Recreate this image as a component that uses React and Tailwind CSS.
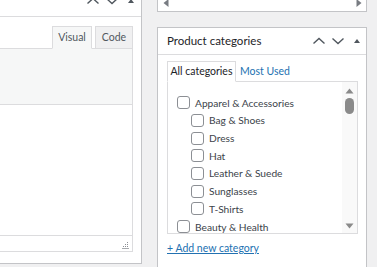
const ChevUp = ({ className = "" }) => (
  <svg width="14" height="10" viewBox="0 0 14 10" className={className}>
    <path d="M1.5 7.5 L7 2.5 L12.5 7.5" fill="none" stroke="#50575e" strokeWidth="1.4" />
  </svg>
);
const ChevDown = ({ className = "" }) => (
  <svg width="14" height="10" viewBox="0 0 14 10" className={className}>
    <path d="M1.5 2.5 L7 7.5 L12.5 2.5" fill="none" stroke="#50575e" strokeWidth="1.4" />
  </svg>
);
const TriUp = ({ className = "", color = "#50575e" }) => (
  <svg width="14" height="10" viewBox="0 0 14 10" className={className}>
    <path d="M4 7 L7 3 L10 7 Z" fill={color} />
  </svg>
);

const Checkbox = () => (
  <span className="w-[13px] h-[13px] shrink-0 border border-[#8c8f94] rounded-[3px] bg-white" />
);

const Item = ({ label, child }) => (
  <li className={`h-[17.7px] flex items-center gap-[5px] ${child ? "ml-[14px]" : ""}`}>
    <Checkbox />
    <span className="text-[10.2px] leading-none text-[#3c434a] whitespace-nowrap">{label}</span>
  </li>
);

export default function App() {
  return (
    <div className="w-[377px] h-[267px] bg-[#f0f0f1] flex items-start overflow-hidden font-['Lato','Liberation_Sans',sans-serif] text-[#3c434a]">
      {/* Left panel */}
      <div className="w-[142px] h-[264px] shrink-0 bg-white border-r border-b border-[#c3c4c7] flex flex-col">
        <div className="h-[17px] shrink-0 border-b border-[#dcdcde] flex items-start justify-end gap-[5px] pr-[3px] overflow-hidden">
          <ChevUp className="-mt-[4px]" />
          <ChevDown className="-mt-[4px]" />
          <TriUp className="-mt-[4px]" />
        </div>
        <div className="flex justify-end gap-[3px] pr-[8px] mt-[9px] relative z-10">
          <div className="w-[40px] h-[23px] border border-[#dcdcde] border-b-[#f6f7f7] bg-[#f6f7f7] flex items-center justify-center text-[10.5px] text-[#50575e]">
            Visual
          </div>
          <div className="w-[38px] h-[23px] border border-[#dcdcde] bg-[#f0f0f1] flex items-center justify-center text-[10.5px] text-[#50575e]">
            Code
          </div>
        </div>
        <div className="-mt-px mr-[8px] border border-l-0 border-[#dcdcde] flex flex-col">
          <div className="h-[56px] bg-[#f6f7f7] border-b border-[#dcdcde]" />
          <div className="h-[131px] bg-white border-b border-[#dcdcde]" />
          <div className="h-[15px] bg-white flex items-end justify-end pr-[3px] pb-[2px]">
            <svg width="7" height="7" viewBox="0 0 7 7">
              <rect x="5" y="0" width="1" height="1" fill="#8c8f94" />
              <rect x="3" y="2" width="1" height="1" fill="#8c8f94" />
              <rect x="5" y="2" width="1" height="1" fill="#8c8f94" />
              <rect x="1" y="4" width="1" height="1" fill="#8c8f94" />
              <rect x="3" y="4" width="1" height="1" fill="#8c8f94" />
              <rect x="5" y="4" width="1" height="1" fill="#8c8f94" />
              <rect x="0" y="6" width="7" height="1" fill="#a7aaad" />
            </svg>
          </div>
        </div>
      </div>

      {/* Right column */}
      <div className="w-[210px] shrink-0 ml-[15px] flex flex-col">
        <div className="h-[12px] bg-white border-x border-b border-[#c3c4c7] flex items-start justify-between pl-[5px] pr-[4px] overflow-hidden">
          <svg width="6" height="8" viewBox="0 0 6 8" className="-mt-[1px]">
            <path d="M5.5 0 L0.5 4 L5.5 8 Z" fill="#787c82" />
          </svg>
          <svg width="6" height="8" viewBox="0 0 6 8" className="-mt-[1px]">
            <path d="M0.5 0 L5.5 4 L0.5 8 Z" fill="#787c82" />
          </svg>
        </div>

        <div className="mt-[15px] h-[250px] bg-white border border-[#c3c4c7] flex flex-col">
          <div className="h-[27px] shrink-0 border-b border-[#dcdcde] flex items-center pl-[9px] pr-[2px]">
            <h2 className="flex-1 text-[11.5px] font-normal text-[#1d2327] leading-none">Product categories</h2>
            <div className="flex items-center gap-[5px]">
              <ChevUp />
              <ChevDown />
              <TriUp />
            </div>
          </div>
          <div className="pl-[9px] pr-[8px] pt-[6px]">
            <div className="flex items-end relative z-10">
              <div className="w-[69px] h-[21px] border border-[#dcdcde] border-b-white bg-white flex items-center justify-center text-[10.5px] text-[#1d2327]">
                All categories
              </div>
              <div className="h-[21px] flex items-center pl-[4px] text-[10.5px] text-[#2271b1]">Most Used</div>
            </div>
            <div className="-mt-px h-[153px] border border-[#dcdcde] bg-white flex">
              <ul className="flex-1 pt-[12px] pl-[9px] overflow-hidden">
                <Item label="Apparel & Accessories" />
                <Item label="Bag & Shoes" child />
                <Item label="Dress" child />
                <Item label="Hat" child />
                <Item label="Leather & Suede" child />
                <Item label="Sunglasses" child />
                <Item label="T-Shirts" child />
                <Item label="Beauty & Health" />
              </ul>
              <div className="w-[15px] shrink-0 bg-[#f9f9f9] flex flex-col items-center pt-[6px] pb-[4px]">
                <svg width="9" height="6" viewBox="0 0 9 6">
                  <path d="M0.5 5.5 L4.5 0.5 L8.5 5.5 Z" fill="#8a8a8a" />
                </svg>
                <div className="w-[9px] h-[16px] rounded-full bg-[#8a8a8a] mt-[4px]" />
                <div className="flex-1" />
                <svg width="9" height="6" viewBox="0 0 9 6">
                  <path d="M0.5 0.5 L4.5 5.5 L8.5 0.5 Z" fill="#8a8a8a" />
                </svg>
              </div>
            </div>
            <a href="#" className="block mt-[8px] text-[10.5px] leading-[13px] text-[#2271b1] underline">
              + Add new category
            </a>
          </div>
        </div>
      </div>
    </div>
  );
}
